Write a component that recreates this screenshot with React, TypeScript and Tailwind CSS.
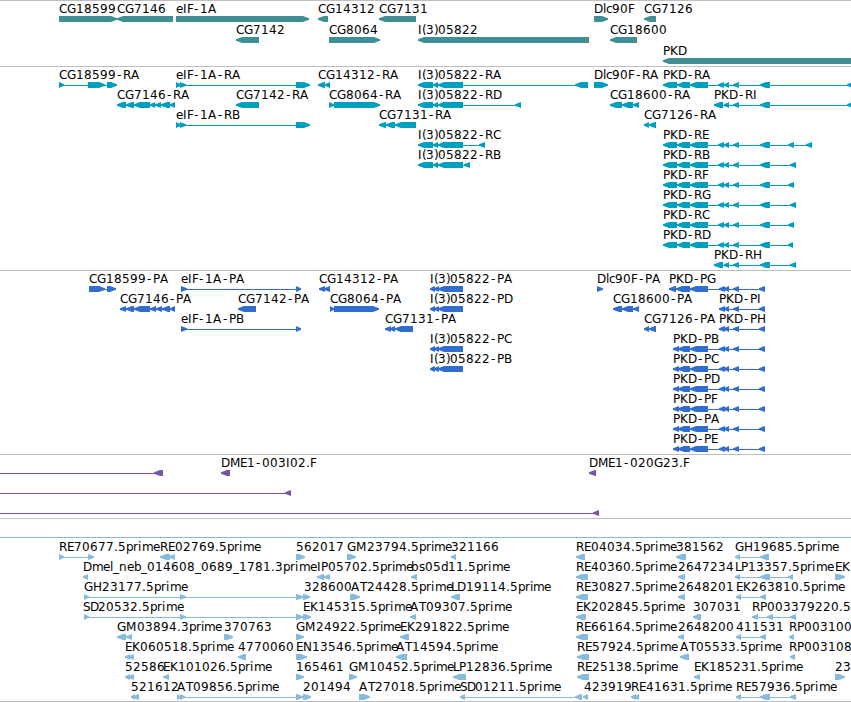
import clsx from "clsx";

type Dir = "l" | "r";

// label, label x, row, strand, blocks, optional start of the connecting line
type Feature = [string, number, number, Dir, number[][], number?];

type TrackProps = {
  features: Feature[];
  height: number;
  firstRow?: number;
  rowHeight?: number;
  color: string;
  className: string;
};

// Horizontal advance of each character, digits and anything missing take 8
const ADVANCE: Record<string, number> = {
  A: 9, C: 8, D: 8.5, E: 7, F: 6.5, G: 9, H: 9, I: 3.5, K: 8, L: 6, M: 10.5,
  N: 9, P: 7, R: 8, S: 6.5, T: 7, "-": 7, "(": 4, ")": 4, ".": 4, _: 6,
  b: 7.5, c: 6, d: 7.5, e: 7, i: 3.5, l: 3.5, m: 11, n: 7.5, p: 7.4, r: 5, s: 6,
};

const glyphPositions = (label: string, x: number) => {
  let pos = x;
  return label
    .split("")
    .map((ch) => {
      // the hyphen is narrow, so it sits in the middle of its cell
      const at = ch === "-" ? pos + 1 : pos;
      pos += ADVANCE[ch] ?? 8;
      return Math.round(at);
    })
    .join(" ");
};

const arrow = (x1: number, x2: number, y: number, dir: Dir) => {
  const tip = Math.min(6, x2 - x1);
  if (dir === "l") {
    return `M${x1} ${y + 2.2}V${y + 3.8}L${x1 + tip} ${y + 6}H${x2}V${y}H${x1 + tip}Z`;
  }
  return `M${x2} ${y + 2.2}V${y + 3.8}L${x2 - tip} ${y + 6}H${x1}V${y}H${x2 - tip}Z`;
};

const Track = ({ features, height, firstRow = 16, rowHeight = 20, color, className }: TrackProps) => {
  return (
    <section className={clsx("w-full border-t", className)}>
      <svg width="851" height={height - 1} viewBox={`0 1 851 ${height - 1}`} className="block">
        {features.map(([label, x, row, dir, blocks, lineStart], i) => {
          const top = firstRow + row * rowHeight;
          const start = lineStart ?? blocks[0][0];
          const end = blocks[blocks.length - 1][1];
          return (
            <g key={i}>
              <g fill={color}>
                <rect x={start} y={top + 3} width={end - start} height={1} />
                {blocks.map(([x1, x2]) => (
                  <path key={x1} d={arrow(x1, x2, top, dir)} />
                ))}
              </g>
              {label && (
                <text x={glyphPositions(label, x)} y={top - 3} fill="#000">
                  {label}
                </text>
              )}
            </g>
          );
        })}
      </svg>
    </section>
  );
};

const genes: Feature[] = [
  ["CG18599", 59, 0, "r", [[59, 117]]],
  ["CG7146", 117, 0, "l", [[117, 173]]],
  ["eIF-1A", 176, 0, "r", [[176, 309]]],
  ["CG7142", 236, 1, "l", [[236, 259]]],
  ["CG14312", 318, 0, "l", [[318, 328]]],
  ["CG8064", 329, 1, "r", [[329, 380]]],
  ["CG7131", 379, 0, "l", [[379, 416]]],
  ["I(3)05822", 418, 1, "l", [[418, 589]]],
  ["Dlc90F", 594, 0, "r", [[594, 608]]],
  ["CG18600", 610, 1, "l", [[610, 637]]],
  ["CG7126", 644, 0, "l", [[644, 656]]],
  ["PKD", 663, 2, "l", [[663, 860]]],
];

const i3Rna = [[418, 433], [433, 438], [438, 463]];
const pkdMid = [[724, 729], [733, 739], [760, 770]];
const pkdRna = [[663, 677], [677, 690], [690, 708], [718, 724], ...pkdMid];

const transcripts: Feature[] = [
  ["CG18599-RA", 59, 0, "r", [[59, 64], [88, 105], [107, 117]]],
  ["CG7146-RA", 117, 1, "l", [[117, 126], [126, 134], [134, 150], [150, 155], [155, 161], [161, 170], [170, 175]]],
  ["eIF-1A-RA", 176, 0, "r", [[176, 181], [180, 186], [296, 310]]],
  ["eIF-1A-RB", 176, 2, "r", [[176, 181], [180, 186], [296, 310]]],
  ["CG7142-RA", 236, 1, "l", [[236, 259]]],
  ["CG14312-RA", 318, 0, "l", [[318, 325], [325, 330]]],
  ["CG8064-RA", 329, 1, "r", [[329, 334], [334, 380]]],
  ["CG7131-RA", 379, 2, "l", [[379, 386], [386, 395], [395, 416]]],
  ["I(3)05822-RA", 418, 0, "l", [...i3Rna, [575, 588]]],
  ["I(3)05822-RD", 418, 1, "l", [...i3Rna, [515, 521]]],
  ["I(3)05822-RC", 418, 3, "l", [...i3Rna, [479, 485]]],
  ["I(3)05822-RB", 418, 4, "l", [...i3Rna, [464, 470]]],
  ["Dlc90F-RA", 594, 0, "r", [[594, 608]]],
  ["CG18600-RA", 610, 1, "l", [[610, 622], [622, 633], [633, 639]]],
  ["CG7126-RA", 644, 2, "l", [[644, 649], [649, 656]]],
  ["PKD-RA", 663, 0, "l", [...pkdRna, [847, 855]]],
  ["PKD-RI", 714, 1, "l", [[714, 723], ...pkdMid, [847, 855]]],
  ["PKD-RE", 663, 3, "l", [...pkdRna, [788, 794], [806, 812]]],
  ["PKD-RB", 663, 4, "l", [...pkdRna, [790, 796]]],
  ["PKD-RF", 663, 5, "l", [...pkdRna, [788, 794]]],
  ["PKD-RG", 663, 6, "l", [...pkdRna, [790, 796]]],
  ["PKD-RC", 663, 7, "l", [...pkdRna, [788, 794]]],
  ["PKD-RD", 663, 8, "l", [...pkdRna, [788, 793]]],
  ["PKD-RH", 714, 9, "l", [[714, 723], ...pkdMid, [790, 796]]],
];

const i3Protein = [[430, 435], [434, 439], [438, 463]];
const pkdTail = [[724, 729], [733, 739], [759, 765]];
const pkdProtein = [[673, 679], [678, 690], [690, 708], [719, 725], ...pkdTail];

const proteins: Feature[] = [
  ["CG18599-PA", 89, 0, "r", [[89, 105], [107, 116]]],
  ["CG7146-PA", 120, 1, "l", [[120, 126], [126, 134], [134, 150], [150, 156], [156, 162], [162, 170], [170, 175]]],
  ["eIF-1A-PA", 181, 0, "r", [[181, 187], [296, 301]]],
  ["eIF-1A-PB", 181, 2, "r", [[181, 187], [296, 301]]],
  ["CG7142-PA", 238, 1, "l", [[238, 256]]],
  ["CG14312-PA", 319, 0, "l", [[319, 325], [324, 330]]],
  ["CG8064-PA", 330, 1, "r", [[330, 334], [334, 379]]],
  ["CG7131-PA", 385, 2, "l", [[385, 391], [390, 395], [395, 413]]],
  ["I(3)05822-PA", 430, 0, "l", i3Protein],
  ["I(3)05822-PD", 430, 1, "l", i3Protein],
  ["I(3)05822-PC", 430, 3, "l", i3Protein],
  ["I(3)05822-PB", 430, 4, "l", i3Protein],
  ["Dlc90F-PA", 597, 0, "r", [[597, 603]]],
  ["CG18600-PA", 613, 1, "l", [[613, 622], [622, 633], [633, 639]]],
  ["CG7126-PA", 644, 2, "l", [[644, 649], [649, 656]]],
  ["PKD-PG", 669, 0, "l", [[669, 676], [676, 690], [690, 708], [719, 725], ...pkdTail]],
  ["PKD-PI", 719, 1, "l", [[719, 725], ...pkdTail]],
  ["PKD-PH", 719, 2, "l", [[719, 725], ...pkdTail]],
  ["PKD-PB", 673, 3, "l", pkdProtein],
  ["PKD-PC", 673, 4, "l", pkdProtein],
  ["PKD-PD", 673, 5, "l", pkdProtein],
  ["PKD-PF", 673, 6, "l", pkdProtein],
  ["PKD-PA", 673, 7, "l", pkdProtein],
  ["PKD-PE", 673, 8, "l", pkdProtein],
];

const bacEnds: Feature[] = [
  ["", 0, 0, "l", [[154, 163]], 0],
  ["DME1-003I02.F", 221, 0, "l", [[221, 230]]],
  ["DME1-020G23.F", 589, 0, "l", [[589, 596]]],
  ["", 0, 1, "l", [[285, 291]], 0],
  ["", 0, 2, "l", [[593, 599]], 0],
];

const ests: Feature[] = [
  ["RE70677.5prime", 59, 0, "r", [[59, 64], [88, 94]]],
  ["RE02769.5prime", 160, 0, "l", [[160, 170], [169, 175]]],
  ["562017", 296, 0, "r", [[296, 305]]],
  ["GM23794.5prime", 347, 0, "r", [[347, 356]]],
  ["321166", 451, 0, "l", [[451, 456]]],
  ["RE04034.5prime", 576, 0, "l", [[576, 585]]],
  ["381562", 676, 0, "l", [[676, 686]]],
  ["GH19685.5prime", 735, 0, "l", [[735, 740], [760, 769]]],

  ["Dmel_neb_014608_0689_1781.3prime", 83, 1, "l", [[83, 88]]],
  ["IP05702.5prime", 317, 1, "l", [[317, 324], [324, 330]]],
  ["bs05d11.5prime", 411, 1, "l", [[411, 417]]],
  ["RE40360.5prime", 576, 1, "l", [[576, 588]]],
  ["2647234", 678, 1, "l", [[678, 685]]],
  ["LP13357.5prime", 735, 1, "l", [[735, 740], [760, 770], [788, 793]]],
  ["EK", 835, 1, "r", [[835, 845]]],

  ["GH23177.5prime", 84, 2, "r", [[84, 89], [180, 186], [296, 303]]],
  ["328600", 304, 2, "r", [[303, 310]]],
  ["AT24428.5prime", 351, 2, "r", [[350, 360]]],
  ["LD19114.5prime", 451, 2, "l", [[451, 460]]],
  ["RE30827.5prime", 576, 2, "l", [[576, 588]]],
  ["2648201", 678, 2, "l", [[678, 685]]],
  ["EK263810.5prime", 736, 2, "l", [[736, 741], [760, 766]]],

  ["SD20532.5prime", 83, 3, "r", [[84, 89], [180, 186], [296, 303]]],
  ["EK145315.5prime", 303, 3, "r", [[303, 311]]],
  ["AT09307.5prime", 410, 3, "l", [[410, 416]]],
  ["EK202845.5prime", 576, 3, "l", [[576, 586]]],
  ["307031", 693, 3, "l", [[693, 701]]],
  ["RP003379220.5", 752, 3, "l", [[752, 758], [767, 773], [790, 796]]],

  ["GM03894.3prime", 117, 4, "l", [[117, 126], [126, 132]]],
  ["370763", 224, 4, "r", [[224, 233]]],
  ["GM24922.5prime", 296, 4, "r", [[296, 304]]],
  ["EK291822.5prime", 400, 4, "l", [[400, 409]]],
  ["RE66164.5prime", 576, 4, "l", [[576, 588]]],
  ["2648200", 678, 4, "l", [[678, 684]]],
  ["411531", 736, 4, "l", [[736, 741], [760, 766]]],
  ["RP003100", 789, 4, "l", [[789, 794]]],

  ["EK060518.5prime", 125, 5, "l", [[125, 130], [128, 134]]],
  ["4770060", 238, 5, "l", [[238, 246]]],
  ["EN13546.5prime", 296, 5, "r", [[296, 307]]],
  ["AT14594.5prime", 396, 5, "l", [[396, 407]]],
  ["RE57924.5prime", 577, 5, "l", [[577, 589]]],
  ["AT05533.5prime", 680, 5, "l", [[680, 689]]],
  ["RP003108", 789, 5, "l", [[790, 795]]],

  ["52586", 125, 6, "l", [[125, 130], [128, 134]]],
  ["EK101026.5prime", 163, 6, "l", [[163, 169]]],
  ["165461", 296, 6, "r", [[296, 304]]],
  ["GM10452.5prime", 349, 6, "r", [[349, 357]]],
  ["LP12836.5prime", 453, 6, "l", [[453, 466]]],
  ["RE25138.5prime", 577, 6, "l", [[577, 589]]],
  ["EK185231.5prime", 694, 6, "l", [[694, 700]]],
  ["23", 835, 6, "r", [[835, 845]]],

  ["521612", 131, 7, "l", [[131, 135], [133, 139]]],
  ["AT09856.5prime", 177, 7, "r", [[177, 181], [180, 185], [296, 303]]],
  ["201494", 303, 7, "r", [[303, 311]]],
  ["AT27018.5prime", 359, 7, "r", [[359, 370]]],
  ["SD01211.5prime", 460, 7, "l", [[460, 465], [575, 582]]],
  ["423919", 584, 7, "l", [[583, 588]]],
  ["RE41631.5prime", 631, 7, "l", [[631, 636], [634, 639]]],
  ["RE57936.5prime", 736, 7, "l", [[736, 741], [760, 770], [790, 796]]],
];

export default function App() {
  return (
    <main className="flex h-[702px] w-[851px] flex-col overflow-hidden bg-white font-['DejaVu_Sans',sans-serif] text-[12px]">
      <Track features={genes} height={66} rowHeight={21} color="#3f8f94" className="border-[#bebebe]" />
      <Track features={transcripts} height={204} color="#009fc0" className="border-[#bebebe]" />
      <Track features={proteins} height={184} color="#316dcf" className="border-[#bebebe]" />
      <Track features={bacEnds} height={64} color="#7756a7" className="border-[#bebebe]" />
      {/* Empty track */}
      <div className="h-[19px] border-t border-[#bebebe]" />
      <Track features={ests} height={164} firstRow={17} color="#87bbdd" className="border-[#87bbdd]" />
      <div className="border-t border-[#bebebe]" />
    </main>
  );
}
